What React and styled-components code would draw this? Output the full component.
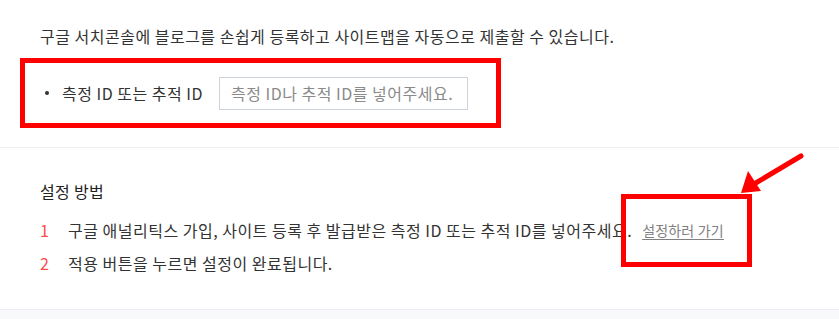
import React from "react";
import styled, { createGlobalStyle } from "styled-components";

const Global = createGlobalStyle`
  html, body {
    margin: 0;
    padding: 0;
    background: #f8f9fb;
  }
  body {
    font-family: "Noto Sans CJK KR", "Noto Sans", sans-serif;
    color: #333;
  }
`;

const Page = styled.div`
  position: relative;
  width: 839px;
  height: 319px;
  overflow: hidden;
  background: #f8f9fb;
`;

const Section = styled.section`
  background: #fff;
  border-bottom: 1px solid #eceef1;
  padding: ${(p) => p.$pad};
`;

const Intro = styled.p`
  margin: 0 0 11px 40px;
  font-size: 16px;
  letter-spacing: 0.5px;
  line-height: 22px;
  color: #333;
`;

const Highlight = styled.div`
  box-sizing: border-box;
  margin-left: 20px;
  width: 481px;
  height: 70px;
  border: 5px solid #ff0000;
  display: flex;
  align-items: center;
`;

const Dot = styled.span`
  width: 4px;
  height: 4px;
  border-radius: 50%;
  background: #333;
  margin: 0 13px 0 20px;
`;

const Label = styled.label`
  font-size: 16px;
  letter-spacing: 0.5px;
  line-height: 22px;
  color: #333;
  margin-right: 16px;
  white-space: nowrap;
`;

const Input = styled.input`
  box-sizing: border-box;
  width: 249px;
  height: 33px;
  border: 1px solid #ccd3dd;
  border-radius: 0;
  padding: 0 11px;
  font-family: inherit;
  font-size: 16px;
  letter-spacing: 0.5px;
  color: #333;
  outline: none;
  &::placeholder {
    color: #8a8a8a;
  }
`;

const Title = styled.h3`
  margin: 0 0 11px 40px;
  font-size: 16px;
  letter-spacing: 0.3px;
  line-height: 22px;
  font-weight: 400;
  color: #222;
`;

const Steps = styled.ol`
  margin: 0;
  padding: 0 0 0 40px;
  list-style: none;
`;

const Step = styled.li`
  display: flex;
  align-items: center;
  height: 33px;
  font-size: 16px;
  letter-spacing: 0.5px;
  color: #333;
  white-space: nowrap;
`;

const Num = styled.span`
  width: 28px;
  color: #ff4b4b;
`;

const GoLink = styled.a`
  margin-left: 10px;
  font-size: 14px;
  letter-spacing: 0.2px;
  color: #808080;
  text-decoration: underline;
  text-underline-offset: 3px;
`;

const Marker = styled.div`
  position: absolute;
  box-sizing: border-box;
  left: 621px;
  top: 194px;
  width: 131px;
  height: 73px;
  border: 5px solid #ff0000;
  pointer-events: none;
`;

const Arrow = styled.svg`
  position: absolute;
  left: 730px;
  top: 148px;
  pointer-events: none;
`;

export default function App() {
  return (
    <>
      <Global />
      <Page>
        <Section $pad="25px 0 19px">
          <Intro>
            구글 서치콘솔에 블로그를 손쉽게 등록하고 사이트맵을 자동으로 제출할 수 있습니다.
          </Intro>
          <Highlight>
            <Dot />
            <Label>측정 ID 또는 추적 ID</Label>
            <Input placeholder="측정 ID나 추적 ID를 넣어주세요." />
          </Highlight>
        </Section>
        <Section $pad="32px 0 30px">
          <Title>설정 방법</Title>
          <Steps>
            <Step>
              <Num>1</Num>
              구글 애널리틱스 가입, 사이트 등록 후 발급받은 측정 ID 또는 추적 ID를 넣어주세요.
              <GoLink href="#">설정하러 가기</GoLink>
            </Step>
            <Step>
              <Num>2</Num>
              적용 버튼을 누르면 설정이 완료됩니다.
            </Step>
          </Steps>
        </Section>
        <Marker />
        <Arrow width="80" height="56" viewBox="0 0 80 56">
          <line
            x1="71"
            y1="8"
            x2="24"
            y2="36"
            stroke="#ff0000"
            strokeWidth="5"
            strokeLinecap="round"
          />
          <polygon points="11,45 18,23 31,43" fill="#ff0000" />
        </Arrow>
      </Page>
    </>
  );
}
